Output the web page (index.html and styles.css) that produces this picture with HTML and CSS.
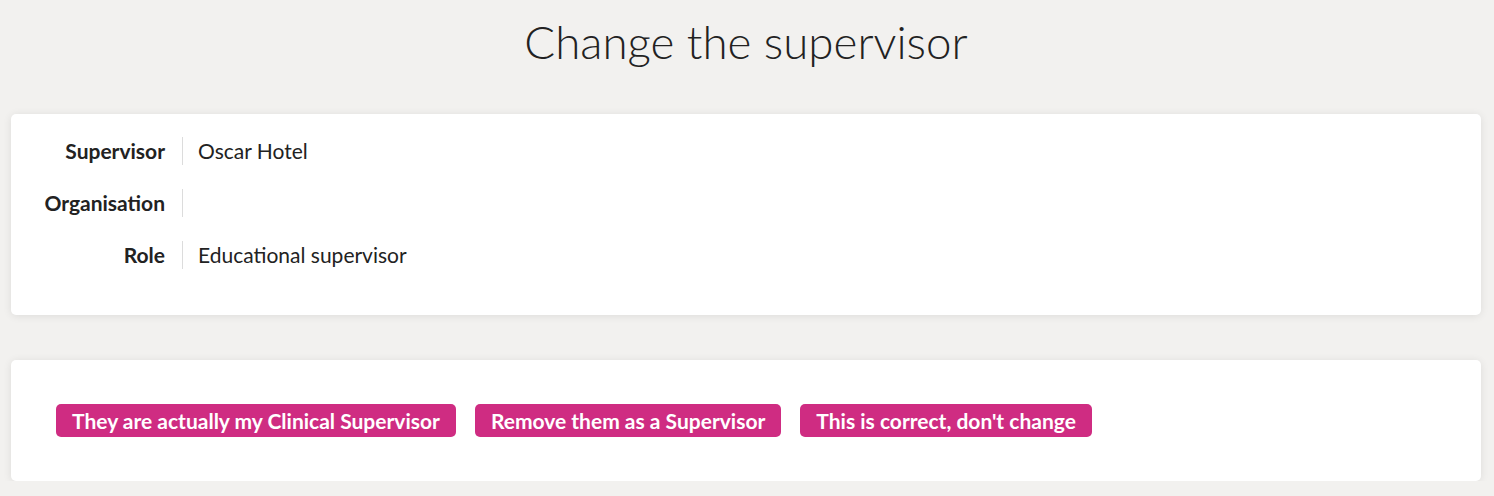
FILE: index.html
```html
<!DOCTYPE html>
<html lang="en">
<head>
<meta charset="utf-8">
<title>Change the supervisor</title>
<link rel="stylesheet" href="styles.css">
</head>
<body>
<main class="page">
  <h1 class="title">Change the supervisor</h1>
  <section class="card details">
    <div class="row">
      <div class="label">Supervisor</div>
      <div class="value">Oscar Hotel</div>
    </div>
    <div class="row">
      <div class="label">Organisation</div>
      <div class="value"></div>
    </div>
    <div class="row">
      <div class="label">Role</div>
      <div class="value">Educational supervisor</div>
    </div>
  </section>
  <section class="card actions">
    <button class="btn" type="button">They are actually my Clinical Supervisor</button>
    <button class="btn" type="button">Remove them as a Supervisor</button>
    <button class="btn" type="button">This is correct, don't change</button>
  </section>
</main>
</body>
</html>
```

FILE: styles.css
```css
html, body {
  margin: 0;
  padding: 0;
  background: #f2f1ef;
  font-family: Lato, "Open Sans", sans-serif;
  color: #222;
}

.page {
  padding: 0 13px 0 11px;
}

.title {
  margin: 0;
  padding: 14px 0 0;
  height: 100px;
  box-sizing: border-box;
  text-align: center;
  font-weight: 300;
  font-size: 45.7px;
  line-height: 56px;
  color: #222;
}

.card {
  background: #fff;
  border-radius: 5px;
  box-shadow: 0 1px 8px rgba(0, 0, 0, 0.09);
}

.details {
  margin-top: 14px;
  padding: 23px 0 46px;
  display: flex;
  flex-direction: column;
  gap: 24px;
}

.row {
  display: flex;
  align-items: stretch;
  height: 28px;
}

.label {
  width: 172px;
  box-sizing: border-box;
  text-align: right;
  font-weight: 700;
  font-size: 21px;
  line-height: 28px;
  padding-right: 17px;
  border-right: 1px solid #dcdcdc;
  color: #222;
}

.value {
  padding-left: 15px;
  font-size: 21px;
  line-height: 28px;
  color: #222;
}

.actions {
  margin-top: 45px;
  padding: 44px 45px;
  display: flex;
  gap: 19px;
  height: 121px;
  box-sizing: border-box;
  align-items: center;
}

.btn {
  font-family: Lato, "Open Sans", sans-serif;
  font-weight: 700;
  font-size: 21px;
  height: 33px;
  line-height: 33px;
  padding: 0 16px;
  border: none;
  border-radius: 5px;
  background: #cf2c82;
  color: #fff;
  cursor: pointer;
}
```
